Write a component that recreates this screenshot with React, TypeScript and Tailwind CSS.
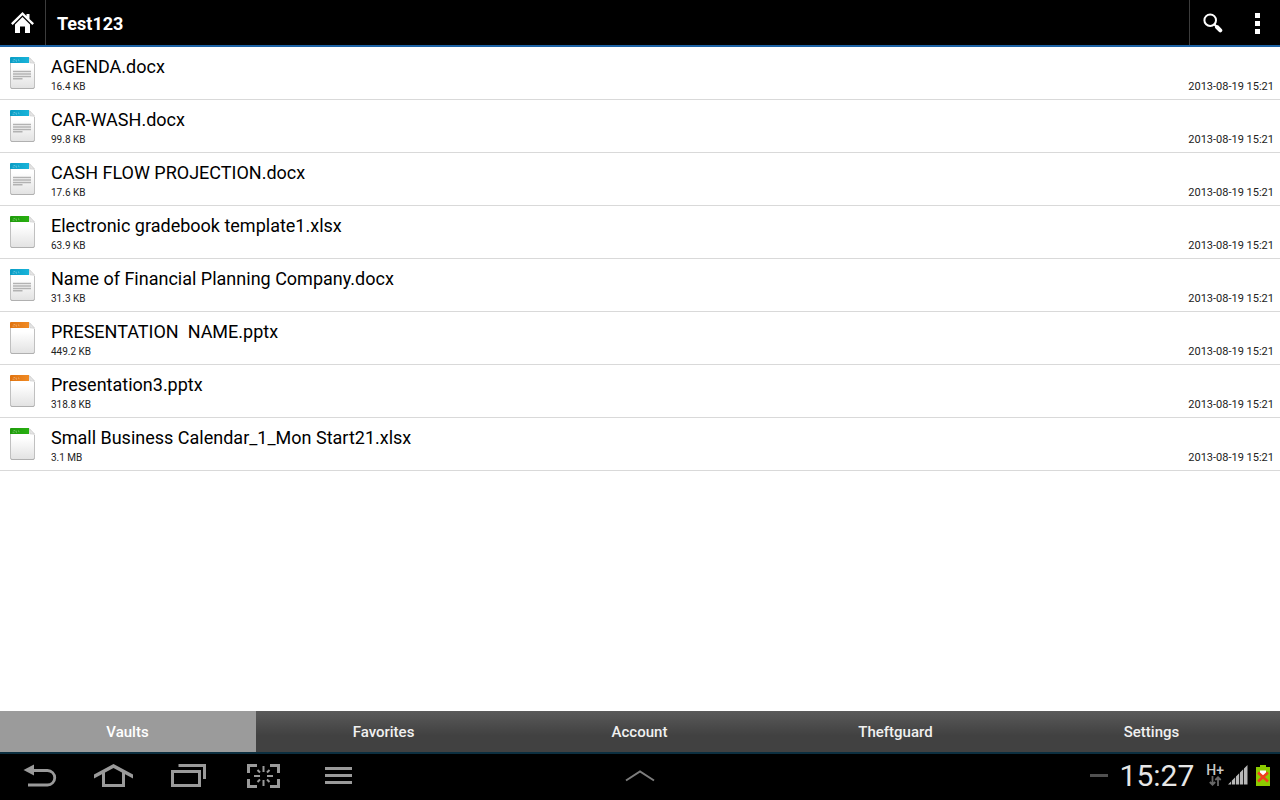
import React from "react";

type FileKind = "docx" | "xlsx" | "pptx";

interface VaultFile {
  name: string;
  size: string;
  date: string;
  kind: FileKind;
}

const files: VaultFile[] = [
  { name: "AGENDA.docx", size: "16.4 KB", date: "2013-08-19 15:21", kind: "docx" },
  { name: "CAR-WASH.docx", size: "99.8 KB", date: "2013-08-19 15:21", kind: "docx" },
  { name: "CASH FLOW PROJECTION.docx", size: "17.6 KB", date: "2013-08-19 15:21", kind: "docx" },
  { name: "Electronic gradebook template1.xlsx", size: "63.9 KB", date: "2013-08-19 15:21", kind: "xlsx" },
  { name: "Name of Financial Planning Company.docx", size: "31.3 KB", date: "2013-08-19 15:21", kind: "docx" },
  { name: "PRESENTATION  NAME.pptx", size: "449.2 KB", date: "2013-08-19 15:21", kind: "pptx" },
  { name: "Presentation3.pptx", size: "318.8 KB", date: "2013-08-19 15:21", kind: "pptx" },
  { name: "Small Business Calendar_1_Mon Start21.xlsx", size: "3.1 MB", date: "2013-08-19 15:21", kind: "xlsx" },
];

const tabs = ["Vaults", "Favorites", "Account", "Theftguard", "Settings"];

const bandColors: Record<FileKind, [string, string]> = {
  docx: ["#0a9cc4", "#18b4da"],
  xlsx: ["#1f9a0c", "#28b010"],
  pptx: ["#e0730f", "#f08a24"],
};

function FileIcon({ kind }: { kind: FileKind }) {
  const [dark, light] = bandColors[kind];
  const paper = `paper-${kind}`;
  const band = `band-${kind}`;
  return (
    <svg width="25" height="32" viewBox="0 0 25 32" className="mt-0.5 shrink-0" aria-hidden="true">
      <defs>
        <linearGradient id={paper} x1="0" y1="0" x2="0" y2="1">
          <stop offset="0.3" stopColor="#ffffff" />
          <stop offset="1" stopColor="#e2e2e2" />
        </linearGradient>
        <linearGradient id={band} x1="0" y1="0" x2="1" y2="0">
          <stop offset="0" stopColor={dark} />
          <stop offset="1" stopColor={light} />
        </linearGradient>
      </defs>
      <path
        d="M1.5 .5H19L24.5 6V30Q24.5 31.5 23 31.5H2Q.5 31.5 .5 30V1.5Z"
        fill={`url(#${paper})`}
        stroke="#c0c0c0"
      />
      <path d="M1 30.700Q1 31.500 2 31.500H23Q24 31.500 24.300 30.600" fill="none" stroke="#b0b0b0" />
      <path d="M0 6V1Q0 0 1 0H19V6Z" fill={`url(#${band})`} />
      <path d="M19 0L25 6V7Q23 6 19 6Z" fill="#f7f7f7" />
      <path d="M19.500 .8L24.300 6.200L20 5.800Z" fill="#e6e6e6" stroke="#c8c8c8" strokeWidth=".6" />
      <path d="M2.500 4.200H4.500M3.500 2.500H5M6 2.500V4.200H7M8.500 2.500L9 4.200" fill="none" stroke="#ffffff" strokeOpacity=".4" strokeWidth=".8" />
      {kind === "docx" && (
        <path d="M3 14.500H21M3 17H21M3 19.500H21M3 21.800H12.500" fill="none" stroke="#b2b2b2" strokeWidth="1.400" />
      )}
    </svg>
  );
}

function HomeIcon() {
  return (
    <svg width="23" height="22" viewBox="0 0 23 22" fill="#ffffff" aria-hidden="true">
      <path d="M11.500 0L15.500 4V2H18.500V7L23 11.300L21.300 13L11.500 3.200L1.700 13L0 11.300Z" />
      <path d="M11.500 5L19 12.500V21H14V14.500H9V21H4V12.500Z" />
    </svg>
  );
}

function SearchIcon() {
  return (
    <svg width="20" height="20" viewBox="0 0 20 20" fill="none" stroke="#ffffff" strokeLinecap="round" aria-hidden="true">
      <circle cx="7.200" cy="7.200" r="5.800" strokeWidth="2" />
      <path d="M11.500 11.500L13 13" strokeWidth="2.200" />
      <path d="M14 14L17.300 17.300" strokeWidth="4" />
    </svg>
  );
}

function MoreIcon() {
  return (
    <svg width="5" height="21" viewBox="0 0 5 21" fill="#ffffff" aria-hidden="true">
      <path d="M0 0H5V5H0ZM0 8H5V13H0ZM0 16H5V21H0Z" />
    </svg>
  );
}

const navIcons = [
  {
    label: "Back",
    art: (
      <>
        <path d="M14 8.500H29.500A7 7 0 0 1 29.500 23H10" strokeWidth="2.800" />
        <path d="M5.500 8L16 2.500V13.500Z" fill="#9a9a9a" stroke="none" />
      </>
    ),
  },
  {
    label: "Home",
    art: (
      <>
        <path d="M10.500 10V23.500H30.500V10" strokeWidth="3" />
        <path d="M20.500 2L40 12.500V16.500L20.500 6L1 16.500V12.500Z" fill="#9a9a9a" stroke="none" />
      </>
    ),
  },
  {
    label: "Recent apps",
    art: (
      <>
        <path d="M4.500 9.500H31.500V23.500H4.500Z" strokeWidth="3" />
        <path d="M10.500 3.500H36.500V17" strokeWidth="3" />
      </>
    ),
  },
  {
    label: "Screenshot",
    art: (
      <>
        <path d="M14 3.500H5.500V11M27 3.500H35.500V11M14 24.500H5.500V17M27 24.500H35.500V17" strokeWidth="3" />
        <path d="M20.500 4V10M20.500 18V24M11 14H17M24 14H30" strokeWidth="2" />
        <path d="M14.500 8L17 10.500M26.500 8L24 10.500M14.500 20L17 17.500M26.500 20L24 17.500" strokeWidth="2" />
      </>
    ),
  },
  { label: "Menu", art: <path d="M7 6.500H34M7 13.500H34M7 20.500H34" strokeWidth="3" /> },
];

export default function App() {
  return (
    <div className="flex min-h-screen flex-col bg-white font-[Roboto,sans-serif] text-black">
      <header className="flex h-[47px] border-b-2 border-[#1c62a5] bg-black text-white">
        <button aria-label="Home" className="flex w-[46px] items-center justify-center border-r border-[#3c3c3c]">
          <HomeIcon />
        </button>
        <h1 className="flex flex-1 items-center px-[11px] pt-0.5 text-lg font-bold">Test123</h1>
        <button aria-label="Search" className="flex w-[46px] items-center justify-center border-l border-[#3c3c3c]">
          <SearchIcon />
        </button>
        <button aria-label="More options" className="flex w-[45px] items-center justify-center pt-0.5">
          <MoreIcon />
        </button>
      </header>

      <main className="flex-1">
        <ul>
          {files.map((file) => (
            <li key={file.name} className="border-b border-[#d9d9d9]">
              <a href="#" className="flex items-start gap-4 pt-2 pr-1.5 pb-1 pl-2.5">
                <FileIcon kind={file.kind} />
                <span className="flex flex-1 flex-col">
                  <span className="text-lg leading-6 whitespace-pre">{file.name}</span>
                  <span className="text-[10px] leading-4 text-[#222]">{file.size}</span>
                </span>
                <span className="self-end text-[11px] leading-4 text-[#222]">{file.date}</span>
              </a>
            </li>
          ))}
        </ul>
      </main>

      <nav aria-label="Sections" className="grid h-[43px] grid-cols-5 border-b-2 border-[#0c2f40]">
        {tabs.map((tab, i) => (
          <button
            key={tab}
            aria-current={i === 0 ? "page" : undefined}
            className={
              i === 0
                ? "bg-[#9b9b9b] pt-0.5 pr-px text-[15px] font-medium text-white"
                : "bg-linear-to-b from-[#5a5a5a] to-[#414141] to-60% pt-0.5 pr-px text-[15px] font-medium text-[#f0f0f0]"
            }
          >
            {tab}
          </button>
        ))}
      </nav>

      <footer className="grid h-[46px] grid-cols-[1fr_auto_1fr] items-center bg-black">
        <div className="flex pl-px">
          {navIcons.map(({ label, art }) => (
            <button key={label} aria-label={label} className="flex w-[75px] justify-center">
              <svg width="41" height="30" viewBox="0 0 41 30" fill="none" stroke="#9a9a9a" aria-hidden="true">
                {art}
              </svg>
            </button>
          ))}
        </div>
        <button aria-label="Open tray" className="pb-0.5">
          <svg width="30" height="12" viewBox="0 0 30 12" fill="none" stroke="#7d7d7d" strokeWidth="2" aria-hidden="true">
            <path d="M1 10.500L15 1.500L29 10.500" />
          </svg>
        </button>
        <div className="flex items-center justify-end pr-2.5 pb-1">
          <svg width="18" height="3" viewBox="0 0 18 3" className="mr-3" aria-hidden="true">
            <path d="M0 0H18V3H0Z" fill="#505050" />
          </svg>
          <time className="pt-0.5 text-3xl text-[#e6e6e6]">15:27</time>
          <div className="ml-3 flex flex-col items-center">
            <span className="text-sm leading-3 font-medium text-[#c8c8c8]">H+</span>
            <svg width="13" height="10" viewBox="0 0 13 10" fill="none" stroke="#686868" strokeWidth="1.800" aria-hidden="true">
              <path d="M3.500 0V9M.8 6L3.500 8.700L6.200 6M9 10V1M6.300 4L9 1.300L11.700 4" />
            </svg>
          </div>
          <svg width="20" height="20" viewBox="0 0 20 20" className="ml-1" role="img" aria-label="Signal">
            <path d="M0 19.500L3 16.500V19.500ZM3.800 15.700L7.200 12.300V19.500H3.800ZM8 11.500L11.200 8.300V19.500H8ZM12 7.500L15.200 4.300V19.500H12ZM16 3.500L19.500 0V19.500H16Z" fill="#b8b8b8" />
          </svg>
          <svg width="14" height="21" viewBox="0 0 14 21" className="ml-2" role="img" aria-label="Battery error">
            <path d="M4 0H10V2H14V21H0V2H4Z" fill="#8ccb00" />
            <path d="M4 5.500H10V9L7 14L4 9Z" fill="#ffffff" />
            <path d="M2 7.500L12 16.500M12 7.500L2 16.500" stroke="#f04020" strokeWidth="2.600" />
          </svg>
        </div>
      </footer>
    </div>
  );
}
